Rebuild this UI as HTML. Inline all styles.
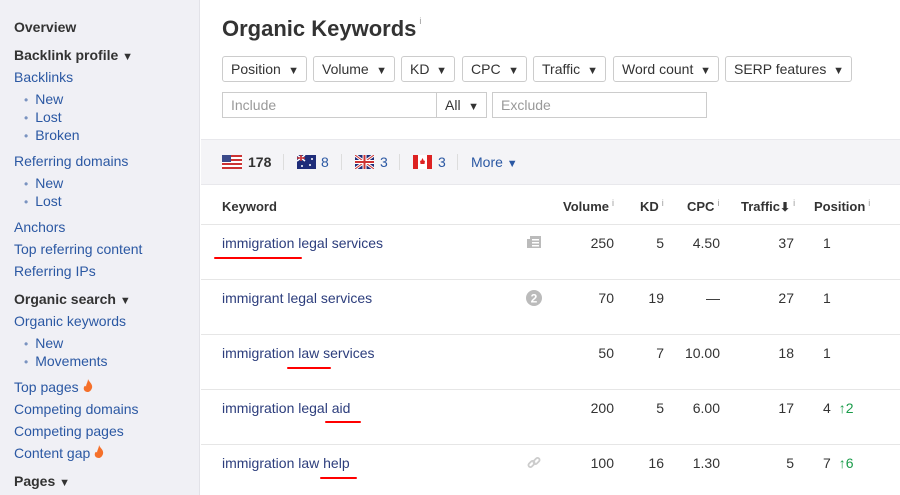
<!DOCTYPE html>
<html><head><meta charset="utf-8"><style>
*{margin:0;padding:0;box-sizing:border-box}
body{width:900px;height:495px;overflow:hidden;font-family:"Liberation Sans",Arial,sans-serif;background:#fff;position:relative;font-size:14px;color:#333}
.sb{position:absolute;left:0;top:0;width:200px;height:495px;background:#f0f0f5;border-right:1px solid #e2e2e8}
.sb div{position:absolute;left:14px;white-space:nowrap}
.h{font-weight:bold;color:#333}
.h span{font-size:11px}
.l{color:#2b58a3}
.b{left:24px!important;color:#2b58a3}
.b:before{content:"•";color:#7a93c0;margin-right:7px;font-size:12px}
.a{position:absolute;white-space:nowrap}
.btn{position:absolute;top:56px;height:26px;border:1px solid #ccc;border-radius:3px;padding:5px 8px;color:#333;font-size:14px;line-height:14px}
.btn:after{content:"▼";font-size:11px;position:absolute;right:7px;top:7px}
.inp{position:absolute;top:92px;height:26px;border:1px solid #ccc;color:#999;padding:5px 8px;line-height:14px}
.band{position:absolute;left:201px;top:139px;width:699px;height:46px;background:#f4f4f7;border-top:1px solid #e8e8ec;border-bottom:1px solid #e8e8ec}
.sep{position:absolute;width:1px;height:16px;top:154px;background:#ddd}
.th{position:absolute;top:199px;font-weight:bold;font-size:13px;color:#333}
.th i{font-style:normal;font-weight:normal;font-size:9px;color:#999;vertical-align:top;margin-left:3px;position:relative;top:-1px}
.row{position:absolute;left:201px;width:699px;height:1px;background:#e6e6e6}
.kw{position:absolute;left:222px;color:#2c3d7c}
.n{position:absolute;text-align:right;color:#333}
.red{position:absolute;height:2px;background:#f00;border-radius:1px}
.g{color:#1a9c4a}
</style></head><body>
<div class="sb">
<div class="h" style="top:19px">Overview</div>
<div class="h" style="top:47px">Backlink profile <span>▼</span></div>
<div class="l" style="top:69px">Backlinks</div>
<div class="b" style="top:91px">New</div>
<div class="b" style="top:109px">Lost</div>
<div class="b" style="top:127px">Broken</div>
<div class="l" style="top:153px">Referring domains</div>
<div class="b" style="top:175px">New</div>
<div class="b" style="top:193px">Lost</div>
<div class="l" style="top:219px">Anchors</div>
<div class="l" style="top:241px">Top referring content</div>
<div class="l" style="top:263px">Referring IPs</div>
<div class="h" style="top:291px">Organic search <span>▼</span></div>
<div class="l" style="top:313px">Organic keywords</div>
<div class="b" style="top:335px">New</div>
<div class="b" style="top:353px">Movements</div>
<div class="l" style="top:379px">Top pages <svg width="10" height="13" viewBox="0 0 10 13"><path d="M5 0C6 3 10 5 9 9 8 12 6 13 5 13 2 13 0 11 1 8 2 6 3 7 3 8 3 5 5 3 5 0Z" fill="#f5702a"/></svg></div>
<div class="l" style="top:401px">Competing domains</div>
<div class="l" style="top:423px">Competing pages</div>
<div class="l" style="top:445px">Content gap <svg width="10" height="13" viewBox="0 0 10 13"><path d="M5 0C6 3 10 5 9 9 8 12 6 13 5 13 2 13 0 11 1 8 2 6 3 7 3 8 3 5 5 3 5 0Z" fill="#f5702a"/></svg></div>
<div class="h" style="top:473px">Pages <span>▼</span></div>
</div>

<div class="a" style="left:222px;top:16px;font-size:22px;font-weight:bold;color:#333">Organic Keywords<sup style="font-size:9px;font-weight:normal;color:#999;vertical-align:top;margin-left:3px">i</sup></div>

<div class="btn" style="left:222px;width:85px">Position</div>
<div class="btn" style="left:313px;width:82px">Volume</div>
<div class="btn" style="left:401px;width:54px">KD</div>
<div class="btn" style="left:462px;width:65px">CPC</div>
<div class="btn" style="left:533px;width:73px">Traffic</div>
<div class="btn" style="left:613px;width:106px">Word count</div>
<div class="btn" style="left:725px;width:127px">SERP features</div>

<div class="inp" style="left:222px;width:215px">Include</div>
<div class="inp" style="left:436px;width:51px;color:#333;border-left:1px solid #ccc">All<span style="font-size:11px;position:absolute;right:7px;top:7px">▼</span></div>
<div class="inp" style="left:492px;width:215px">Exclude</div>

<div class="band"></div>
<svg class="a" style="left:222px;top:155px" width="20" height="14"><rect width="20" height="14" fill="#fff"/><g fill="#c33"><rect y="0" width="20" height="2"/><rect y="4" width="20" height="2"/><rect y="8" width="20" height="2"/><rect y="12" width="20" height="2"/></g><rect width="9" height="7" fill="#3b4a8a"/></svg>
<div class="a" style="left:248px;top:154px;font-weight:bold">178</div>
<div class="sep" style="left:283px"></div>
<svg class="a" style="left:297px;top:155px" width="19" height="14"><rect width="19" height="14" fill="#1f2d7a"/><path d="M0 0L8 6M8 0L0 6" stroke="#fff" stroke-width="1.5"/><path d="M4 0V6M0 3H8" stroke="#c33" stroke-width="1.5"/><circle cx="13" cy="10" r="1" fill="#fff"/><circle cx="15" cy="4" r="1" fill="#fff"/><circle cx="5" cy="11" r="1" fill="#fff"/></svg>
<div class="a" style="left:321px;top:154px;color:#2b58a3">8</div>
<div class="sep" style="left:341px"></div>
<svg class="a" style="left:355px;top:155px" width="19" height="14"><rect width="19" height="14" fill="#1f2d7a"/><path d="M0 0L19 14M19 0L0 14" stroke="#fff" stroke-width="3"/><path d="M0 0L19 14M19 0L0 14" stroke="#c33" stroke-width="1"/><path d="M9.5 0V14M0 7H19" stroke="#fff" stroke-width="4"/><path d="M9.5 0V14M0 7H19" stroke="#c33" stroke-width="2"/></svg>
<div class="a" style="left:380px;top:154px;color:#2b58a3">3</div>
<div class="sep" style="left:399px"></div>
<svg class="a" style="left:413px;top:155px" width="19" height="14"><rect width="19" height="14" fill="#fff"/><rect width="5" height="14" fill="#d22"/><rect x="14" width="5" height="14" fill="#d22"/><path d="M9.5 3L11 6 12 5.5 11.5 9H7.5L7 5.5 8 6Z" fill="#d22"/></svg>
<div class="a" style="left:438px;top:154px;color:#2b58a3">3</div>
<div class="sep" style="left:457px"></div>
<div class="a" style="left:471px;top:154px;color:#2b58a3">More <span style="font-size:11px">▼</span></div>

<div class="th" style="left:222px">Keyword</div>
<div class="th" style="left:563px">Volume<i>i</i></div>
<div class="th" style="left:640px">KD<i>i</i></div>
<div class="th" style="left:687px">CPC<i>i</i></div>
<div class="th" style="left:741px">Traffic<span style="font-size:12px">⬇</span><i>i</i></div>
<div class="th" style="left:814px">Position<i>i</i></div>

<div class="row" style="top:224px"></div>
<div class="row" style="top:279px"></div>
<div class="row" style="top:334px"></div>
<div class="row" style="top:389px"></div>
<div class="row" style="top:444px"></div>

<div class="kw" style="top:235px">immigration legal services</div>
<div class="kw" style="top:290px">immigrant legal services</div>
<div class="kw" style="top:345px">immigration law services</div>
<div class="kw" style="top:400px">immigration legal aid</div>
<div class="kw" style="top:455px">immigration law help</div>

<div class="red" style="left:214px;top:257px;width:88px"></div>
<div class="red" style="left:287px;top:367px;width:44px"></div>
<div class="red" style="left:325px;top:421px;width:36px"></div>
<div class="red" style="left:320px;top:477px;width:37px"></div>

<svg class="a" style="left:527px;top:236px" width="14" height="13"><rect x="3" y="0" width="11" height="12" fill="#bbb"/><rect x="0" y="3" width="3" height="9" fill="#bbb"/><rect x="5" y="3" width="7" height="1.5" fill="#fff"/><rect x="5" y="6" width="7" height="1.5" fill="#fff"/><rect x="5" y="9" width="7" height="1.5" fill="#fff"/></svg>
<svg class="a" style="left:526px;top:290px" width="16" height="16"><circle cx="8" cy="8" r="8" fill="#bbb"/><text x="8" y="12.5" font-size="12" font-weight="bold" fill="#fff" text-anchor="middle" font-family="Liberation Sans">2</text></svg>
<svg class="a" style="left:527px;top:456px" width="14" height="14"><g fill="none" stroke="#ccc" stroke-width="1.8"><rect x="1" y="6" width="7" height="4" rx="2" transform="rotate(-45 4.5 8)"/><rect x="6" y="3" width="7" height="4" rx="2" transform="rotate(-45 9.5 5)"/></g></svg>

<div class="n" style="left:560px;width:54px;top:235px">250</div>
<div class="n" style="left:630px;width:34px;top:235px">5</div>
<div class="n" style="left:680px;width:40px;top:235px">4.50</div>
<div class="n" style="left:750px;width:44px;top:235px">37</div>
<div class="a" style="left:823px;top:235px">1</div>

<div class="n" style="left:560px;width:54px;top:290px">70</div>
<div class="n" style="left:630px;width:34px;top:290px">19</div>
<div class="n" style="left:680px;width:40px;top:290px">—</div>
<div class="n" style="left:750px;width:44px;top:290px">27</div>
<div class="a" style="left:823px;top:290px">1</div>

<div class="n" style="left:560px;width:54px;top:345px">50</div>
<div class="n" style="left:630px;width:34px;top:345px">7</div>
<div class="n" style="left:680px;width:40px;top:345px">10.00</div>
<div class="n" style="left:750px;width:44px;top:345px">18</div>
<div class="a" style="left:823px;top:345px">1</div>

<div class="n" style="left:560px;width:54px;top:400px">200</div>
<div class="n" style="left:630px;width:34px;top:400px">5</div>
<div class="n" style="left:680px;width:40px;top:400px">6.00</div>
<div class="n" style="left:750px;width:44px;top:400px">17</div>
<div class="a" style="left:823px;top:400px">4 <span class="g" style="margin-left:4px">↑2</span></div>

<div class="n" style="left:560px;width:54px;top:455px">100</div>
<div class="n" style="left:630px;width:34px;top:455px">16</div>
<div class="n" style="left:680px;width:40px;top:455px">1.30</div>
<div class="n" style="left:750px;width:44px;top:455px">5</div>
<div class="a" style="left:823px;top:455px">7 <span class="g" style="margin-left:4px">↑6</span></div>
</body></html>
